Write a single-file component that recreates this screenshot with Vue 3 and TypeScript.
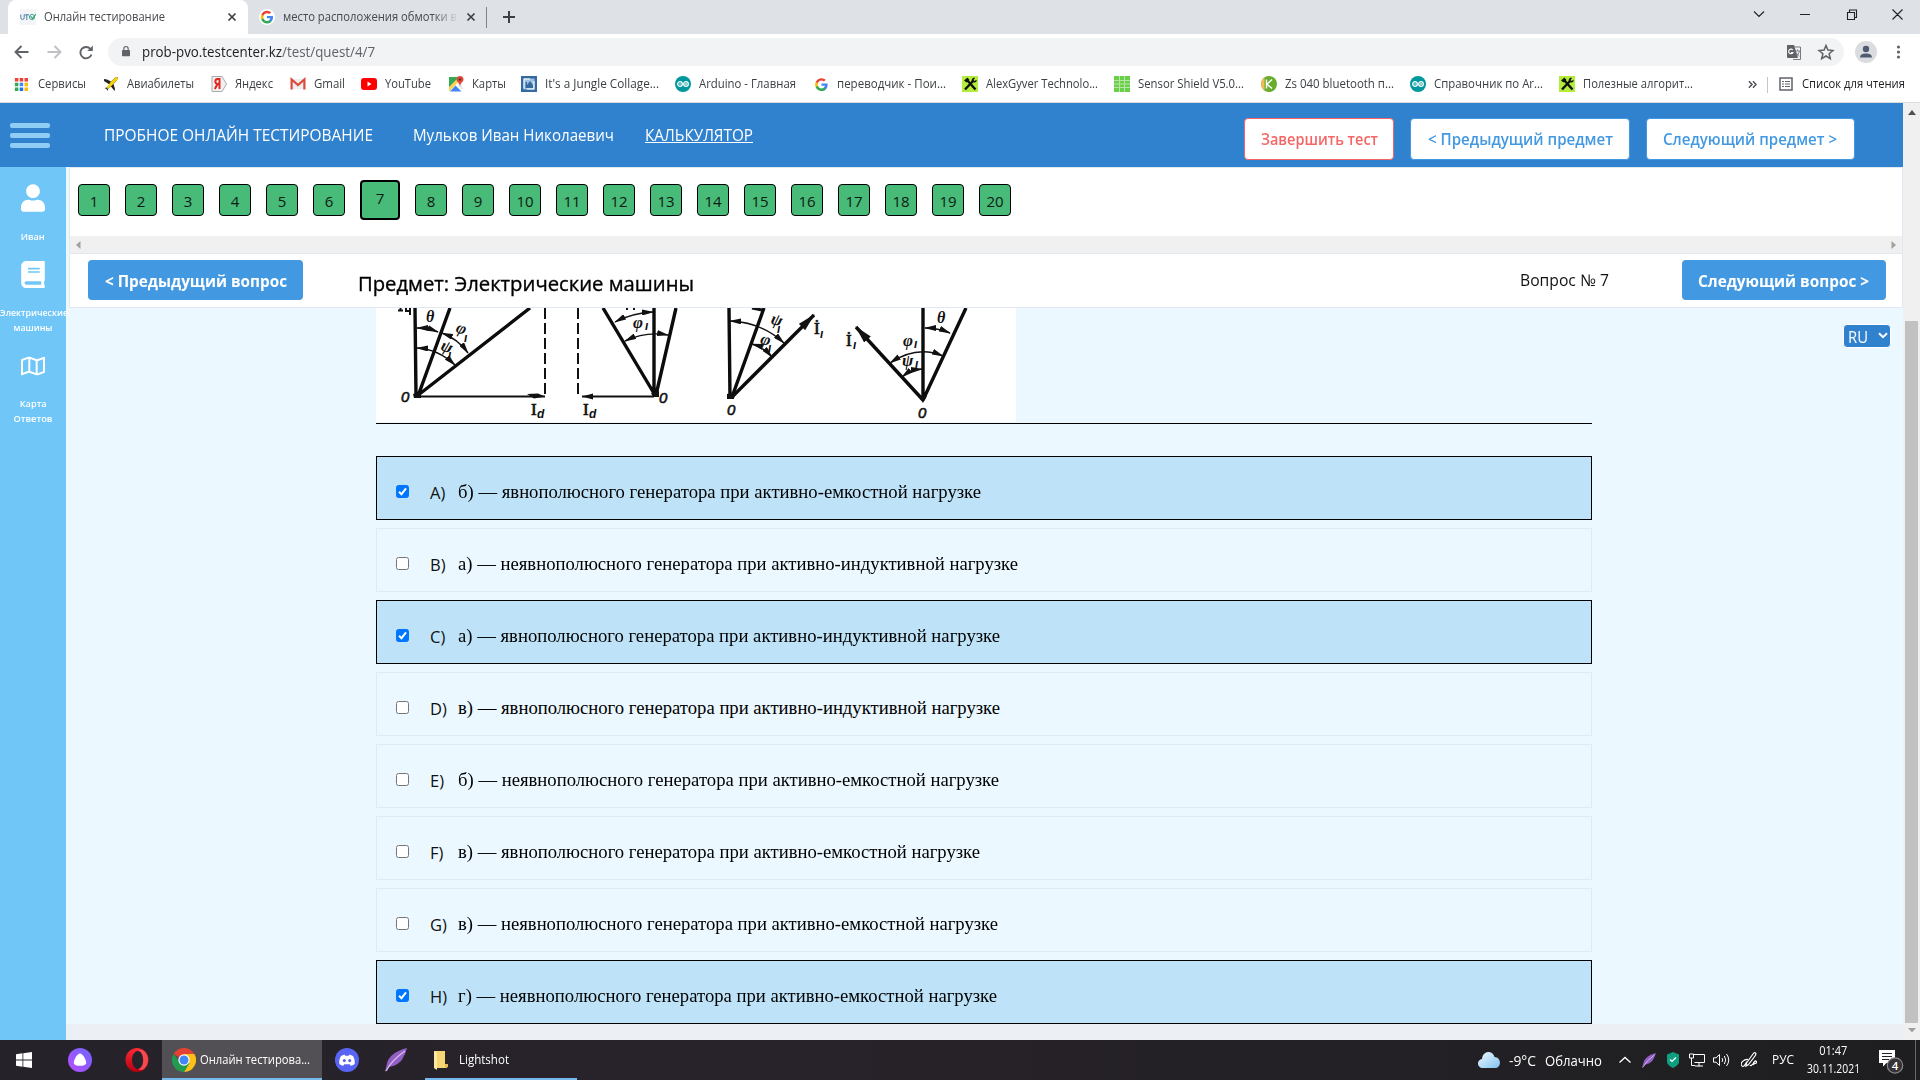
<script setup lang="ts">
interface Bookmark { icon: string; label: string; width: number; pitch: number }
interface Answer { letter: string; text: string; width: number; checked: boolean }

// Squeezes or widens a one-line label to the given width in pixels.
const vFit = {
  mounted(el: HTMLElement, binding: { value: number }) {
    const natural = el.getBoundingClientRect().width
    if (!natural) return
    el.style.transform = `scaleX(${binding.value / natural})`
    el.style.marginRight = `${binding.value - natural}px`
  },
}

const google =
  '<path fill="#4285f4" d="M15.5 8.2c0-.6 0-1-.1-1.500H8v2.900h4.200c-.2 1-.7 1.800-1.500 2.400v2h2.500c1.500-1.400 2.300-3.400 2.300-5.800z"/><path fill="#34a853" d="M8 16c2.100 0 3.900-.7 5.200-1.900l-2.500-2c-.7.500-1.600.8-2.700.8-2.100 0-3.800-1.400-4.400-3.300H1v2C2.300 14.200 5 16 8 16z"/><path fill="#fbbc05" d="M3.600 9.500a4.700 4.700 0 0 1 0-3v-2H1a8 8 0 0 0 0 7z"/><path fill="#ea4335" d="M8 3.200c1.200 0 2.200.4 3 1.200l2.300-2.300A8 8 0 0 0 1 4.500l2.600 2C4.200 4.600 5.900 3.200 8 3.200z"/>'
const arduino =
  '<circle cx="8" cy="8" r="8" fill="#00979d"/><g fill="none" stroke="#fff" stroke-width="1.300"><circle cx="5" cy="8" r="2.300"/><circle cx="11" cy="8" r="2.300"/></g><path stroke="#fff" stroke-width=".8" d="M4 8h2M10 8h2M11 7v2"/>'
const tools =
  '<path fill="#b4ec3c" d="M0 0h16v16H0z"/><path d="M3 13.500 11 5M5 4l8.500 9.500" stroke="#111" stroke-width="2.400"/><path d="M2 4.500 5.500 1.500 7.500 4 4.500 6.500z" fill="#111"/><path d="M10 5.500c-1-2 1-4.500 3-3.500L11.500 4l1 1 2-1.200c.8 2-2 4-4.500 1.700z" fill="#111"/>'

const icons: Record<string, string> = {
  apps: '<path fill="#ea4335" d="M1 1h4v4H1zM6.500 1h4v4h-4zM12 1h4v4h-4z"/><path fill="#34a853" d="M1 6.500h4v4H1zM1 12h4v4H1z"/><path fill="#4285f4" d="M6.500 6.500h4v4h-4z"/><path fill="#fbbc05" d="M12 6.500h4v4h-4zM12 12h4v4h-4z"/><path fill="#1a73e8" d="M6.500 12h4v4h-4z"/>',
  plane: '<path fill="#222" d="M1 3 4 3.500l4 2L12.500 1.500 15 1 14 4 10.500 8l1.500 5-.5 2L8 10.500 5 13v2L3.500 13 1.500 12l2.500-.500L6.500 8.500 1 5z"/><path fill="#f7d308" d="M8 5.500 13 1.200 15 1l-.5 2.500L6 12.500 4.500 13 4 11z"/>',
  yandex: '<path fill="#f1f1f1" stroke="#aaa" d="M1 .500h10l4.500 7.500-4.500 7.500H1z"/><path fill="none" stroke="#e52620" stroke-width="2" d="M8.500 13V3H6.500C3.800 3 3.500 8 6.500 8h2M6.500 8 3.800 13"/>',
  gmail: '<path fill="#eee" d="M2 3h12v10H2z"/><path fill="none" stroke="#dc4a3d" stroke-width="2.200" d="M1.600 13.500V3.500L8 9l6.400-5.500v10"/>',
  youtube: '<rect y="2" width="16" height="12" rx="3" fill="#f00"/><path d="M6.500 5.500v5l4-2.500z" fill="#fff"/>',
  maps: '<path fill="#34a853" d="M1 1h11L1 12z"/><path fill="#fbd35a" d="M12 4 2 15H1v-4L9 3z"/><path fill="#e4e6e8" d="m12 4 3 10-5-4z"/><path fill="#4285f4" d="m7.500 9.500 6 6H2z"/><path fill="#dd4b3e" d="M8.500 3.500a3.500 3.500 0 1 1 7 0C15.500 6 12.500 7 12 10c-.5-3-3.500-4-3.500-6.500z"/><circle cx="12" cy="3.500" r="1.200" fill="#7b2820"/>',
  photo: '<path fill="#356aa0" d="M0 0h16v16H0z"/><path fill="#9ec3e2" d="M2.500 2.500h11v11h-11z"/><path fill="#356aa0" d="M4.500 6h1.500v3l3-4 3 4v3h-7.500z"/><path fill="#fff" d="M2.500 2.500H9v1H3.500v9h-1zM12.500 5h1v8.500H6v-1h6.500z"/>',
  arduino,
  google,
  tools,
  grid: '<path fill="#6ccf4b" d="M0 0h16v16H0z"/><path stroke="#b4e8a2" d="M0 4.500h16M0 8h16M0 11.500h16M5.500 0v16M10.500 0v16"/>',
  kicad: '<circle cx="8" cy="8" r="8" fill="#68ad2d"/><path d="M3.500 1.500a8 8 0 0 0 0 13z" fill="#f4bc59"/><path d="M5.500 3.500v9M11 3.500 6 8.200l5 4.300" stroke="#fff" stroke-width="1.400" fill="none"/>',
}

const bookmarks: Bookmark[] = [
  { icon: 'apps', label: 'Сервисы', width: 48, pitch: 89 },
  { icon: 'plane', label: 'Авиабилеты', width: 67, pitch: 108 },
  { icon: 'yandex', label: 'Яндекс', width: 38, pitch: 79 },
  { icon: 'gmail', label: 'Gmail', width: 31, pitch: 71 },
  { icon: 'youtube', label: 'YouTube', width: 46, pitch: 87 },
  { icon: 'maps', label: 'Карты', width: 34, pitch: 73 },
  { icon: 'photo', label: "It's a Jungle Collage...", width: 114, pitch: 154 },
  { icon: 'arduino', label: 'Arduino - Главная', width: 97, pitch: 138 },
  { icon: 'google', label: 'переводчик - Пои...', width: 109, pitch: 149 },
  { icon: 'tools', label: 'AlexGyver Technolo...', width: 112, pitch: 152 },
  { icon: 'grid', label: 'Sensor Shield V5.0...', width: 106, pitch: 147 },
  { icon: 'kicad', label: 'Zs 040 bluetooth п...', width: 109, pitch: 149 },
  { icon: 'arduino', label: 'Справочник по Ar...', width: 109, pitch: 149 },
  { icon: 'tools', label: 'Полезные алгорит...', width: 110, pitch: 150 },
]

const current = 7

// Angle arcs of the vector diagrams; each carries an arrowhead at both ends.
const arcs = [
  'M41 20Q52 20 62 24', 'M66 25Q82 31 92 45', 'M41 40Q62 41 79 57',
  'M239 14Q256 5 277 4', 'M249 33Q270 23 292 27',
  'M354 13Q385 14 408 35', 'M376 36Q387 39 396 49',
  'M514 55Q541 37 567 48', 'M526 69Q535 62 546 61', 'M549 20Q562 20 574 25',
]

const answers: Answer[] = [
  { letter: 'A)', text: 'б) — явнополюсного генератора при активно-емкостной нагрузке', width: 523, checked: true },
  { letter: 'B)', text: 'а) — неявнополюсного генератора при активно-индуктивной нагрузке', width: 560, checked: false },
  { letter: 'C)', text: 'а) — явнополюсного генератора при активно-индуктивной нагрузке', width: 542, checked: true },
  { letter: 'D)', text: 'в) — явнополюсного генератора при активно-индуктивной нагрузке', width: 542, checked: false },
  { letter: 'E)', text: 'б) — неявнополюсного генератора при активно-емкостной нагрузке', width: 541, checked: false },
  { letter: 'F)', text: 'в) — явнополюсного генератора при активно-емкостной нагрузке', width: 522, checked: false },
  { letter: 'G)', text: 'в) — неявнополюсного генератора при активно-емкостной нагрузке', width: 540, checked: false },
  { letter: 'H)', text: 'г) — неявнополюсного генератора при активно-емкостной нагрузке', width: 539, checked: true },
]
</script>

<template>
  <div class="screen">
    <div class="tabs">
      <div class="tab active">
        <svg class="fav" viewBox="0 0 16 16"><path fill="#f3f5f7" d="M0 0h16v16H0z" /><path d="M.8 5.500v3q0 2 1.700 2t1.700-2v-3M4.500 5.800h4.500M6.800 5.800V11" stroke="#36739c" stroke-width=".9" fill="none" /><circle cx="12" cy="8" r="2.600" fill="none" stroke="#4c9ba0" /><path d="m10.500 7 2 2.500L16 5" stroke="#27ae60" stroke-width="1.200" fill="none" /></svg>
        <span v-fit="121" class="t">Онлайн тестирование</span>
        <svg class="close" viewBox="0 0 10 10"><path d="m1.500 1.500 7 7m0-7-7 7" /></svg>
      </div>
      <div class="tab second">
        <svg class="fav round" viewBox="-2 -2 20 20" v-html="google"></svg>
        <div class="fade"><span v-fit="174" class="t">место расположения обмотки в</span></div>
        <svg class="close" viewBox="0 0 10 10"><path d="m1.500 1.500 7 7m0-7-7 7" /></svg>
      </div>
      <svg class="plus" viewBox="0 0 14 14"><path d="M7 1v12M1 7h12" /></svg>
      <svg class="wincontrols" viewBox="0 0 160 34"><path d="m6 11.500 5 5 5-5M52 14.500h10M99.500 12.500h7v7h-7zM101.500 12v-2h7v7.500H107M144.500 9.500l10 10M154.500 9.500l-10 10" /></svg>
    </div>

    <div class="toolbar">
      <svg class="navicons" viewBox="0 0 108 32">
        <path d="M28.500 16H15.500m6-6-6 6 6 6" stroke="#5f6368" />
        <path d="M47.500 16h13m-6-6 6 6-6 6" stroke="#bfc1c4" />
        <path d="M90.500 13A5.700 5.700 0 1 0 91.500 18.500" stroke="#5f6368" /><path d="M92.800 9.500v5.500h-5.500z" />
      </svg>
      <div class="address">
        <svg class="lock" viewBox="0 0 10 14"><path fill="#5f6368" d="M1 5h8q1 0 1 1v6q0 1-1 1H1q-1 0-1-1V6q0-1 1-1z" /><path d="M2.300 5.500V3.500a2.700 2.700 0 0 1 5.400 0v2" fill="none" stroke="#5f6368" stroke-width="1.400" /></svg>
        <span v-fit="233" class="url">prob-pvo.testcenter.kz<i>/test/quest/4/7</i></span>
        <svg class="addricons" viewBox="0 0 52 20">
          <path d="M1 3h7l4 13H2q-1 0-1-1z" fill="#5f6368" /><path d="M8 5h6.500v12.500H7" fill="none" stroke="#777b80" />
          <path d="M6.800 8A2.300 2.300 0 1 0 7 10.500H5" fill="none" stroke="#fff" stroke-width="1.100" /><path d="M9 9h5m-2.500-1.500V9m2 0q-1 4-3 5m-.5-3.500 3 4" fill="none" stroke="#777b80" stroke-width=".9" />
          <path d="m40 3.500 1.900 4.600 5 .4-3.800 3.200 1.200 4.900-4.300-2.600-4.300 2.600 1.200-4.900-3.800-3.200 5-.4z" fill="none" stroke="#5f6368" stroke-width="1.500" />
        </svg>
      </div>
      <svg class="profile" viewBox="0 0 60 28"><ellipse cx="11" cy="14" rx="11" ry="11" fill="#dadce0" /><circle cx="11" cy="11" r="3.200" fill="#4d5b70" /><path d="M5 19.500q0-4 6-4t6 4z" fill="#4d5b70" /><g fill="#5f6368"><circle cx="43.500" cy="9" r="1.600" /><circle cx="43.500" cy="14" r="1.600" /><circle cx="43.500" cy="19" r="1.600" /></g></svg>
    </div>

    <div class="bookmarks">
      <a v-for="b in bookmarks" :key="b.label" class="bm" :style="{ width: b.pitch + 'px' }">
        <svg viewBox="0 0 16 16" :class="b.icon" v-html="icons[b.icon]"></svg>
        <span v-fit="b.width" class="t">{{ b.label }}</span>
      </a>
      <svg class="more" viewBox="0 0 10 10"><path d="m1 1.500 3.500 3.500L1 8.500m4.500-7L9 5 5.500 8.500" /></svg>
      <span class="bmsep"></span>
      <svg class="list" viewBox="0 0 14 14"><path d="M1 1h12v12H1z" fill="none" stroke="#5f6368" stroke-width="1.500" /><path d="M3 4.500h2m1 0h5M3 7h2m1 0h5M3 9.500h2m1 0h5" stroke="#5f6368" stroke-width="1.200" /></svg>
      <span v-fit="103" class="t dark">Список для чтения</span>
    </div>

    <div class="page">
      <div class="app">
        <header>
          <div class="burger"><i></i><i></i><i></i></div>
          <span v-fit="269" class="h brand">ПРОБНОЕ ОНЛАЙН ТЕСТИРОВАНИЕ</span>
          <span v-fit="201" class="h person">Мульков Иван Николаевич</span>
          <a v-fit="108" class="h calc">КАЛЬКУЛЯТОР</a>
          <div class="actions">
            <button class="finish"><span v-fit="117">Завершить тест</span></button>
            <button class="prev"><span v-fit="185">&lt; Предыдущий предмет</span></button>
            <button class="next"><span v-fit="174">Следующий предмет &gt;</span></button>
          </div>
        </header>

        <div class="body">
          <aside>
            <svg class="user" viewBox="0 0 448 512"><path d="M224 256c70.700 0 128-57.300 128-128S294.700 0 224 0 96 57.300 96 128s57.300 128 128 128zm89.600 32h-16.700c-22.200 10.200-46.900 16-72.900 16s-50.600-5.800-72.900-16h-16.700C60.200 288 0 348.200 0 422.400V464c0 26.500 21.500 48 48 48h352c26.500 0 48-21.500 48-48v-41.600c0-74.200-60.200-134.400-134.400-134.400z" /></svg>
            <div class="cap c1"><span v-fit="24">Иван</span></div>
            <svg class="book" viewBox="0 0 448 512"><path d="M448 360V24c0-13.300-10.700-24-24-24H96C43 0 0 43 0 96v320c0 53 43 96 96 96h328c13.300 0 24-10.700 24-24v-16c0-7.500-3.500-14.300-8.900-18.700-4.200-15.400-4.200-59.300 0-74.700 5.400-4.300 8.900-11.100 8.900-18.600zM128 134c0-3.300 2.700-6 6-6h212c3.300 0 6 2.700 6 6v20c0 3.300-2.700 6-6 6H134c-3.300 0-6-2.700-6-6v-20zm0 64c0-3.300 2.700-6 6-6h212c3.300 0 6 2.700 6 6v20c0 3.300-2.700 6-6 6H134c-3.300 0-6-2.700-6-6v-20zm253.400 250H96c-17.700 0-32-14.300-32-32 0-17.600 14.400-32 32-32h285.400c-1.900 17.100-1.900 46.900 0 64z" /></svg>
            <div class="cap c2"><span v-fit="68">Электрические</span><span v-fit="39">машины</span></div>
            <svg class="map" viewBox="0 0 576 512"><path d="M560 32c-2 0-4 .400-6 1.200L384 96 212 35.300a64 64 0 0 0-40-.200L20.100 88A32 32 0 0 0 0 117.700V464c0 9.200 7.500 16 16 16 2 0 4-.400 6-1.200L192 416l172 60.700a64 64 0 0 0 40 .200l151.900-52.800A32 32 0 0 0 576 394.300V48c0-9.200-7.500-16-16-16zM224 90.400l128 45.200v286l-128-45.200zM48 418V129l128-44.500v286.200l-.600.200zm480-35-128 44.500V141.300l.600-.200L528 94z" /></svg>
            <div class="cap c3"><span v-fit="27">Карта</span><span v-fit="39">Ответов</span></div>
          </aside>

          <main>
            <div class="questions">
              <div class="numbers">
                <a v-for="n in 20" :key="n" :class="{ current: n === current }">{{ n }}</a>
              </div>
              <div class="hscroll"><svg viewBox="0 0 5 8"><path d="M4.500 0v8L0 4z" /></svg><svg viewBox="0 0 5 8"><path d="M.5 0v8L5 4z" /></svg></div>
            </div>
            <div class="subject">
              <button class="qprev"><span v-fit="182">&lt; Предыдущий вопрос</span></button>
              <h1><span v-fit="336">Предмет: Электрические машины</span></h1>
              <div class="qno"><span v-fit="89">Вопрос № 7</span></div>
              <button class="qnext"><span v-fit="171">Следующий вопрос &gt;</span></button>
            </div>
            <div class="content">
              <div class="paper">
                <div class="figure">
                  <svg class="diagram" viewBox="0 0 640 114">
                    <defs>
                      <marker id="tip" viewBox="0 0 12 6" refX="11" refY="3" markerWidth="12" markerHeight="6" markerUnits="userSpaceOnUse" orient="auto-start-reverse"><path d="M0 0 12 3 0 6z" fill="#111" /></marker>
                      <marker id="bigtip" viewBox="0 0 18 9" refX="17" refY="4.500" markerWidth="18" markerHeight="9" markerUnits="userSpaceOnUse" orient="auto"><path d="M0 0 18 4.500 0 9z" fill="#111" /></marker>
                    </defs>
                    <g class="ray">
                      <path d="M39 0 40 88M74 0 42 88M154 0 41 88" /><path d="M227 0 279 87M278 0V87M300 0 280 87" />
                      <path d="M353 0 354 90M388 0 356 89" /><path d="M547 0V92M590 0 547 92" />
                      <path d="M356 89 438 7" marker-end="url(#bigtip)" /><path d="M547 92 480 19" marker-end="url(#bigtip)" />
                    </g>
                    <g class="dash"><path d="M169 0V88M202 0V88" /></g>
                    <g class="base"><path d="M39 88.500H169M206 88.500h72" /></g>
                    <path d="m151 86 11-.500 7 3-11 2zM206 88.500l11-3v6zM37 86l8-2v6h-7zM275 85l8-2v6h-6zM351 86l8-2-1 7h-7zM543 89l8-1-4 7z" fill="#111" />
                    <g class="arc"><path v-for="d in arcs" :key="d" :d="d" /></g>
                    <path d="m376 0 10 2" stroke="#111" stroke-width="3" />
                    <g class="sym">
                      <path d="M22 2.500h5M24.500 0v2.500M30 0v3h4M34 0v7" fill="none" stroke="#111" stroke-width="2" />
                      <text x="50" y="14">θ</text>
                      <text x="80" y="26" transform="rotate(20 86 22)" class="greek">φ</text><text x="88" y="34" class="sub">ı</text>
                      <text x="65" y="44" transform="rotate(20 71 39)" class="greek">ψ</text><text x="72" y="51" class="sub">ı</text>
                      <text x="25" y="94" class="up">0</text><text x="155" y="107" class="id">I</text><text x="161" y="110" class="sub">d</text>
                      <text x="207" y="107" class="id">I</text><text x="213" y="110" class="sub">d</text><text x="283" y="95" class="up">0</text>
                      <text x="257" y="20" class="greek">φ</text><text x="269" y="22" class="sub">ı</text>
                      <path d="M251 0v2m7-2v2" stroke="#111" stroke-width="2" />
                      <text x="395" y="17" transform="rotate(15 400 12)" class="greek">ψ</text><text x="401" y="25" class="sub">ı</text>
                      <text x="385" y="37" transform="rotate(15 390 31)" class="greek">φ</text><text x="392" y="44" class="sub">ı</text>
                      <text x="438" y="26" class="id">İ</text><text x="444" y="30" class="sub">ı</text><text x="351" y="107" class="up">0</text>
                      <text x="470" y="38" class="id">İ</text><text x="477" y="41" class="sub">ı</text>
                      <text x="527" y="38" class="greek">φ</text><text x="538" y="40" class="sub">ı</text>
                      <text x="526" y="58" class="greek">ψ</text><text x="539" y="60" class="sub">ı</text>
                      <text x="561" y="15">θ</text><text x="542" y="110" class="up">0</text>
                    </g>
                  </svg>
                </div>
                <div v-for="a in answers" :key="a.letter" class="answer" :class="{ on: a.checked }">
                  <svg class="check" viewBox="0 0 13 13"><rect x=".5" y=".5" width="12" height="12" rx="2" /><path v-if="a.checked" d="m3 6.800 2.400 2.500L10 3.300" /></svg>
                  <span class="letter">{{ a.letter }}</span>
                  <span v-fit="a.width" class="atext">{{ a.text }}</span>
                </div>
              </div>
              <div class="lang"><span v-fit="20">RU</span><svg viewBox="0 0 10 7"><path d="m1 1.200 4 4 4-4" /></svg></div>
            </div>
          </main>
        </div>
        <div class="pagebar"></div>
      </div>
      <div class="vscroll"><svg viewBox="0 0 8 5"><path d="M0 5h8L4 0z" fill="#505050" /></svg><div class="thumb"></div><svg viewBox="0 0 8 5"><path d="M0 0h8L4 4.500z" fill="#a0a0a0" /></svg></div>
    </div>

    <footer>
      <svg class="win" viewBox="0 0 16 16"><path fill="#fff" d="M0 2.200 6.500 1.300V7.600H0zM7.300 1.200 16 0v7.600H7.300zM0 8.400h6.500v6.300L0 13.800zM7.300 8.400H16V16l-8.700-1.200z" /></svg>
      <svg class="alice" viewBox="0 0 24 24"><defs><linearGradient id="al" x1="0" x2="1" y1="1" y2="0"><stop stop-color="#b84dff" /><stop offset="1" stop-color="#6e66ff" /></linearGradient></defs><circle cx="12" cy="12" r="12" fill="url(#al)" /><path fill="#fff" d="M12 5.500c3 0 6.500 7 6.200 9.500-.3 3.800-12 3.800-12.400 0C5.500 12.500 9 5.500 12 5.500z" /></svg>
      <svg class="opera" viewBox="0 0 24 24"><defs><linearGradient id="op" x1="0" x2="0" y1="0" y2="1"><stop stop-color="#ff2a38" /><stop offset="1" stop-color="#b3000f" /></linearGradient></defs><path fill="url(#op)" fill-rule="evenodd" d="M12 0a11.500 12 0 1 0 0 24 11.500 12 0 0 0 0-24zm1 3c3.500 0 5 4.500 5 9s-1.500 9-5 9-6-4.500-6-9 2.500-9 6-9z" /><path d="M13 2.500q3.500-2 6.500 1c5 5 4.500 13-.5 17.500q-3 2-6 0c7-1 7-17 0-18.500z" fill="#f34a50" /></svg>
      <div class="task">
        <svg viewBox="0 0 24 24"><path fill="#e34133" d="M12 12 1.600 6A12 12 0 0 1 22.400 6z" /><path fill="#fbc116" d="M12 6h10.400A12 12 0 0 1 12 24l5-9z" /><path fill="#229a4f" d="M1.600 6A12 12 0 0 0 12 24l5.500-9-10-1z" /><circle cx="12" cy="12" r="5.700" fill="#fff" /><circle cx="12" cy="12" r="4.500" fill="#4285f4" /></svg>
        <span v-fit="110">Онлайн тестирова...</span>
      </div>
      <svg class="discord" viewBox="0 0 24 24"><circle cx="12" cy="12" r="12" fill="#5865f2" /><path fill="#fff" d="m6 8 3.500-1.500.7 1.200h3.600l.7-1.200L18 8c1.500 2.500 2 5 1.700 8q-2 1.500-4 1.800l-1-1.600H9.300l-1 1.600q-2-.3-4-1.800C4 13 4.500 10.500 6 8z" /><ellipse cx="9.300" cy="12.600" rx="1.500" ry="1.700" fill="#5865f2" /><ellipse cx="14.700" cy="12.600" rx="1.500" ry="1.700" fill="#5865f2" /></svg>
      <svg class="feather" viewBox="0 0 22 24"><path fill="#9160c2" d="M22 0Q3 5 1.500 17.500L0 24q2-4 3.500-5 8-1 13-6.500L20 6z" /><path d="M1 23Q7 12 20 3" stroke="#d5b5f2" stroke-width="1.500" fill="none" /></svg>
      <div class="folder">
        <svg viewBox="0 0 16 20"><path fill="#f6d574" d="M1 1h11v14h2v3H1z" /><path fill="#ffe8a0" d="m1 1 3 1.500V20L1 18z" /><path fill="#e4b951" d="M12 14h3v3l-3 1z" /></svg>
        <span v-fit="50">Lightshot</span>
      </div>
      <div class="tray">
        <svg class="cloud" viewBox="0 0 22 16"><defs><linearGradient id="cl" x2="1" y2="1"><stop stop-color="#f2faff" /><stop offset="1" stop-color="#7fc1ee" /></linearGradient></defs><path fill="url(#cl)" d="M5 16a4.500 4.500 0 0 1-1-9C5-2 15-2 16.500 5c7 0 7.500 11 0 11z" /></svg>
        <span v-fit="27" class="deg">-9°C</span>
        <span v-fit="57" class="sky">Облачно</span>
        <svg class="up" viewBox="0 0 12 8"><path d="m.5 6.500 5.500-5 5.500 5" fill="none" stroke="#fff" stroke-width="1.300" /></svg>
        <svg class="feather2" viewBox="0 0 22 24"><path fill="#9160c2" d="M22 0Q3 5 1.500 17.500L0 24q2-4 3.500-5 8-1 13-6.500L20 6z" /><path d="M1 23Q7 12 20 3" stroke="#d5b5f2" stroke-width="1.500" fill="none" /></svg>
        <svg class="shield" viewBox="0 0 12 16"><path fill="#0d9f7e" d="m6 0 6 2.500V10q0 3-6 6-6-3-6-6V2.500z" /><path d="m3 7.500 2 2 4-4" fill="none" stroke="#fff" stroke-width="1.200" /></svg>
        <svg class="net" viewBox="0 0 16 14"><path d="M5 1.500h10.500v8H5.500M10 9.500v4M6 13h8M.5 1h4v4h-4zM2.500 5v7.500H6" fill="none" stroke="#fff" /></svg>
        <svg class="vol" viewBox="0 0 17 14"><path d="M.5 4.800H3L6.500 1.500v11L3 9.200H.5z" fill="none" stroke="#fff" /><path d="M9 5q1.500 2 0 4m2.300-6q3 4 0 8M13.500 1q4.500 6 0 12" fill="none" stroke="#fff" /></svg>
        <svg class="pen" viewBox="0 0 16 16"><path d="M5.500 11 12 2q1.500-2 2.500-1t-.5 3L7.500 12.500 5 14zM7 7.500C3 7-1 11 .5 13.500 2.500 16 4 13 6 9.500M9 13c1 2 2-1 3-1 1.500-3 3-4 3.500-2s-3 1-3.500 3" fill="none" stroke="#fff" stroke-width="1.200" /></svg>
        <span v-fit="22" class="rus">РУС</span>
        <div class="clock"><span v-fit="28">01:47</span><span v-fit="53">30.11.2021</span></div>
        <svg class="notif" viewBox="0 0 26 26"><path fill="#fff" d="M0 1h16v13H7.500L4 17.500V14H0z" /><path d="M3 4.500h10M3 7.500h10M3 10.500h7" stroke="#242126" /><circle cx="16" cy="16.500" r="7.700" fill="#353336" stroke="#8a888b" stroke-width="1.200" /><text x="16" y="20.700" text-anchor="middle">4</text></svg>
        <i class="peek"></i>
      </div>
    </footer>
  </div>
</template>

<style>
body { margin: 0; overflow: hidden; }
</style>

<style scoped>
* { box-sizing: border-box; }
.screen { width: 1920px; height: 1080px; display: flex; flex-direction: column; font-family: "Open Sans", "Noto Sans", sans-serif; background: #fff; overflow: hidden; }
svg { display: block; flex: none; }
.t, .h, .url, .atext, button span, h1 span, .qno span, .cap span, .task span, .folder span, .lang span, .tray span { display: inline-block; white-space: pre; transform-origin: 0 50%; flex: none; }

.tabs { height: 34px; flex: none; background: #dee1e6; display: flex; align-items: center; }
.tab { display: flex; align-items: center; height: 34px; }
.tab .t { font-size: 12px; line-height: 34px; color: #45484c; }
.active { width: 240px; margin-left: 8px; background: #fff; border-radius: 8px 8px 0 0; padding-left: 12px; }
.active .t { margin-left: 8px; }
.active .close { margin-left: 62px; }
.fav { width: 16px; height: 16px; }
.fav.round { background: #fff; border-radius: 8px; }
.second { width: 239px; padding-left: 11px; border-right: 1px solid transparent; border-image: linear-gradient(#dee1e6 8px, #808387 8px, #808387 27px, #dee1e6 27px) 1; }
.fade { width: 176px; margin-left: 8px; overflow: hidden; mask-image: linear-gradient(90deg, #000 150px, transparent 176px); }
.second .close { margin-left: 7px; }
.close { width: 10px; height: 10px; }
.close path { stroke: #3c4043; stroke-width: 1.7; }
.plus { width: 14px; height: 14px; margin-left: 15px; }
.plus path { stroke: #3c4043; stroke-width: 2; }
.wincontrols { width: 160px; height: 34px; margin-left: auto; margin-right: 12px; }
.wincontrols path { fill: none; stroke: #222; stroke-width: 1.1; }

.toolbar { height: 34px; flex: none; display: flex; align-items: flex-start; padding-top: 2px; }
.navicons { width: 108px; height: 32px; }
.navicons path { fill: none; stroke-width: 1.9; }
.navicons path:last-child { fill: #5f6368; stroke: none; }
.address { width: 1736px; height: 28px; margin-top: 2px; border-radius: 14px; background: #f1f3f4; display: flex; align-items: center; }
.lock { width: 8px; height: 13px; margin-left: 14px; margin-top: -2px; }
.url { font-size: 14px; line-height: 28px; margin-left: 12px; color: #202124; }
.url i { font-style: normal; color: #5f6368; }
.addricons { width: 52px; height: 20px; margin-left: auto; margin-right: 6px; }
.profile { width: 60px; height: 28px; margin-left: 11px; margin-top: 2px; }

.bookmarks { height: 35px; flex: none; border-bottom: 1px solid #dadce0; display: flex; align-items: center; padding-left: 14px; font-size: 12px; }
.bm { display: flex; align-items: center; flex: none; overflow: hidden; height: 32px; margin-top: -2px; }
.bm svg { width: 16px; height: 16px; margin-right: 8px; }
.bm svg.google { width: 13px; height: 13px; margin: 0 9px 0 2px; }
.bm svg.apps { width: 14px; height: 14px; margin: 0 10px 0 0; }
.t { color: #3c4043; line-height: 20px; }
.dark { color: #202124; margin-top: -2px; }
.more { width: 9px; height: 9px; margin-left: 39px; margin-top: -1px; }
.more path { fill: none; stroke: #4a4d51; stroke-width: 1.6; }
.bmsep { width: 1px; height: 16px; background: #c4c6c9; margin: 0 11px 0 10px; }
.list { width: 14px; height: 14px; margin-right: 9px; margin-top: -2px; }

.page { height: 937px; flex: none; display: flex; }
.app { width: 1903px; display: flex; flex-direction: column; }
header { height: 64px; flex: none; background: #3182ce; display: flex; color: #fff; }
.burger { width: 40px; margin: 20px 54px 0 10px; display: flex; flex-direction: column; gap: 5px; flex: none; }
.burger i { height: 5px; border-radius: 2px; background: #90cdf4; }
.h { font-size: 16px; line-height: 24px; height: 24px; margin-top: 20px; }
.person { margin-left: 40px; }
.calc { margin-left: 31px; text-decoration: underline; text-underline-offset: 1px; }
.actions { margin-left: auto; display: flex; padding: 15px 48px 0 0; gap: 16px; }
button { font-family: inherit; padding: 0; border: 0; background: #fff; height: 42px; border-radius: 4px; font-size: 16px; font-weight: 600; display: flex; align-items: center; line-height: 24px; }
.actions button { border: 1px solid #4299e1; color: #4299e1; }
.actions .finish { width: 150px; border-color: #f56565; color: #f56565; padding-left: 16px; }
.actions .prev { width: 220px; padding-left: 17px; }
.actions .next { width: 209px; padding-left: 16px; }

.body { flex: 1; display: flex; min-height: 0; background: #ebf8ff; }
aside { width: 66px; flex: none; height: 873px; background: #6fc6f7; color: #fff; display: flex; flex-direction: column; align-items: center; position: relative; z-index: 1; }
aside svg path { fill: #fff; }
.user { width: 24px; height: 28px; margin-top: 17px; }
.book { width: 24px; height: 27px; margin-top: 17px; }
.map { width: 24px; height: 22px; margin-top: 16px; }
.cap { font-size: 9px; font-weight: 600; line-height: 15px; display: flex; flex-direction: column; align-items: center; width: 66px; }
.cap span { transform-origin: 50% 50%; margin-right: 0 !important; }
.c1 { margin-top: 17px; }
.c2 { margin-top: 17px; margin-bottom: 4px; }
.c2 span:first-child { align-self: flex-start; transform-origin: 0 50%; }
.c3 { margin-top: 19px; }
main { margin-left: 3px; width: 1834px; display: flex; flex-direction: column; }
.questions { border: 1px solid #e2e8f0; height: 87px; background: #fff; flex: none; display: flex; flex-direction: column; justify-content: space-between; }
.numbers { display: flex; align-items: center; gap: 15px; padding: 12px 0 0 8px; height: 52px; }
.numbers a { width: 32px; height: 32px; border: 1px solid #000; border-radius: 4px; background: #48bb78; font-size: 15px; line-height: 33px; text-align: center; color: #0c1a12; }
.numbers a.current { width: 40px; height: 40px; border-width: 2px; line-height: 32px; }
.hscroll { height: 17px; background: #f0f0f0; display: flex; justify-content: space-between; align-items: center; padding: 0 6px; }
.hscroll svg { width: 5px; height: 8px; fill: #a0a0a0; }
.subject { height: 54px; flex: none; background: #fff; border: 1px solid #e2e8f0; border-top: 0; display: flex; align-items: flex-start; padding: 6px 0 0 18px; }
.subject button { background: #4299e1; color: #fff; font-weight: 700; height: 40px; padding-top: 1px; }
.subject .qprev { width: 215px; padding-left: 17px; }
.subject .qnext { width: 204px; padding-left: 16px; }
h1 { margin: 9px 0 0 55px; font-size: 20px; font-weight: 500; line-height: 30px; width: 336px; color: #000; -webkit-text-stroke: .35px #000; }
.qno { width: 89px; margin: 8px 73px 0 826px; font-size: 16px; line-height: 24px; color: #111; }
.content { flex: 1; display: flex; min-height: 0; }
.paper { width: 1216px; margin-left: 307px; flex: none; }
.figure { height: 116px; border-bottom: 1px solid #000; margin-bottom: 32px; }
.diagram { width: 640px; height: 114px; background: #fff; }
.ray path { stroke: #0c0c0c; stroke-width: 3.4; fill: none; }
.dash path { stroke: #111; stroke-width: 2; stroke-dasharray: 11 4; }
.base path { stroke: #111; stroke-width: 2.2; }
.arc path { fill: none; stroke: #111; stroke-width: 1.4; marker-start: url(#tip); marker-end: url(#tip); }
.sym text { font: italic bold 16px "Liberation Serif", serif; fill: #111; }
.sym text.greek { font: italic bold 17px "Liberation Serif", serif; }
.sym text.up { font: italic 15px "Liberation Sans Narrow", "Liberation Sans", sans-serif; stroke: #111; stroke-width: .6; }
.sym text.id { font: 17px "Liberation Serif", serif; stroke: #111; stroke-width: .7; }
.sym text.sub { font: italic bold 12px "Liberation Sans", sans-serif; }
.answer { height: 64px; border: 1px solid #dcebf5; display: flex; margin-bottom: 8px; padding-left: 19px; }
.answer.on { background: #bee3f8; border-color: #000; }
.check { width: 13px; height: 13px; margin-top: 28px; margin-right: 21px; }
.check rect { fill: #fff; stroke: #767676; }
.on .check rect { fill: #0075ff; stroke: #0075ff; }
.check path { fill: none; stroke: #fff; stroke-width: 2; }
.letter { font-size: 16.5px; width: 28px; line-height: 24px; margin-top: 24px; color: #111; }
.atext { font-family: "Liberation Serif", serif; font-size: 18.67px; line-height: 24px; height: 24px; margin-top: 23px; color: #000; }
.lang { width: 48px; height: 24px; margin: 16px 0 0 251px; background: #3182ce; border: 1px solid #fff; border-radius: 4px; color: #fff; display: flex; align-items: center; font-size: 16px; padding: 1px 0 0 4px; }
.lang svg { width: 10px; height: 7px; margin-left: 10px; margin-top: -3px; }
.lang path { fill: none; stroke: #fff; stroke-width: 2; }
.pagebar { height: 16px; flex: none; margin: -16px 0 0 66px; background: #ecf0f4; position: relative; }
.vscroll { width: 17px; background: #f0f0f0; display: flex; flex-direction: column; align-items: center; padding: 7px 0 7px; }
.vscroll svg { width: 8px; height: 5px; }
.thumb { width: 13px; height: 702px; background: #c1c1c1; margin-top: auto; margin-bottom: 5px; }

footer { height: 40px; flex: none; background: linear-gradient(90deg, #26222a, #28232a 40%, #1e1e20); display: flex; align-items: center; color: #fff; font-size: 12px; }
.win { width: 16px; height: 16px; margin-left: 16px; }
.alice { width: 24px; height: 24px; margin-left: 36px; }
.opera { width: 24px; height: 24px; margin-left: 33px; }
.task { width: 160px; height: 40px; margin-left: 13px; background: #535055; border-bottom: 2px solid #76b9ed; display: flex; align-items: center; padding: 0 0 0 10px; }
.task svg { width: 24px; height: 24px; margin-right: 4px; margin-top: 2px; }
.discord { width: 24px; height: 24px; margin-left: 13px; }
.feather { width: 22px; height: 24px; margin-left: 26px; }
.folder { width: 152px; height: 40px; margin-left: 18px; border-bottom: 2px solid #76b9ed; display: flex; align-items: center; padding-left: 8px; }
.folder svg { width: 16px; height: 20px; margin-right: 10px; margin-top: 2px; }
.tray { margin-left: auto; display: flex; align-items: center; height: 40px; }
.cloud { width: 22px; height: 16px; }
.deg, .sky { font-size: 14px; margin-left: 9px; }
.up { width: 12px; height: 8px; }
.tray .up { margin-left: 17px; }
.feather2 { width: 14px; height: 15px; margin-left: 11px; }
.shield { width: 12px; height: 16px; margin-left: 11px; }
.net { width: 16px; height: 14px; margin-left: 10px; }
.vol { width: 17px; height: 14px; margin-left: 8px; }
.pen { width: 16px; height: 16px; margin-left: 11px; }
.rus { margin-left: 15px; margin-top: -2px; }
.clock { display: flex; flex-direction: column; align-items: center; width: 53px; margin-left: 13px; line-height: 18px; }
.clock span { transform-origin: 50% 50%; margin-right: 0 !important; }
.notif { width: 26px; height: 26px; margin-left: 19px; margin-top: 3px; }
.notif text { font: 600 11.5px "Open Sans", sans-serif; fill: #fff; }
.peek { width: 1px; height: 40px; background: #69676a; margin: 0 4px 0 10px; }
</style>
